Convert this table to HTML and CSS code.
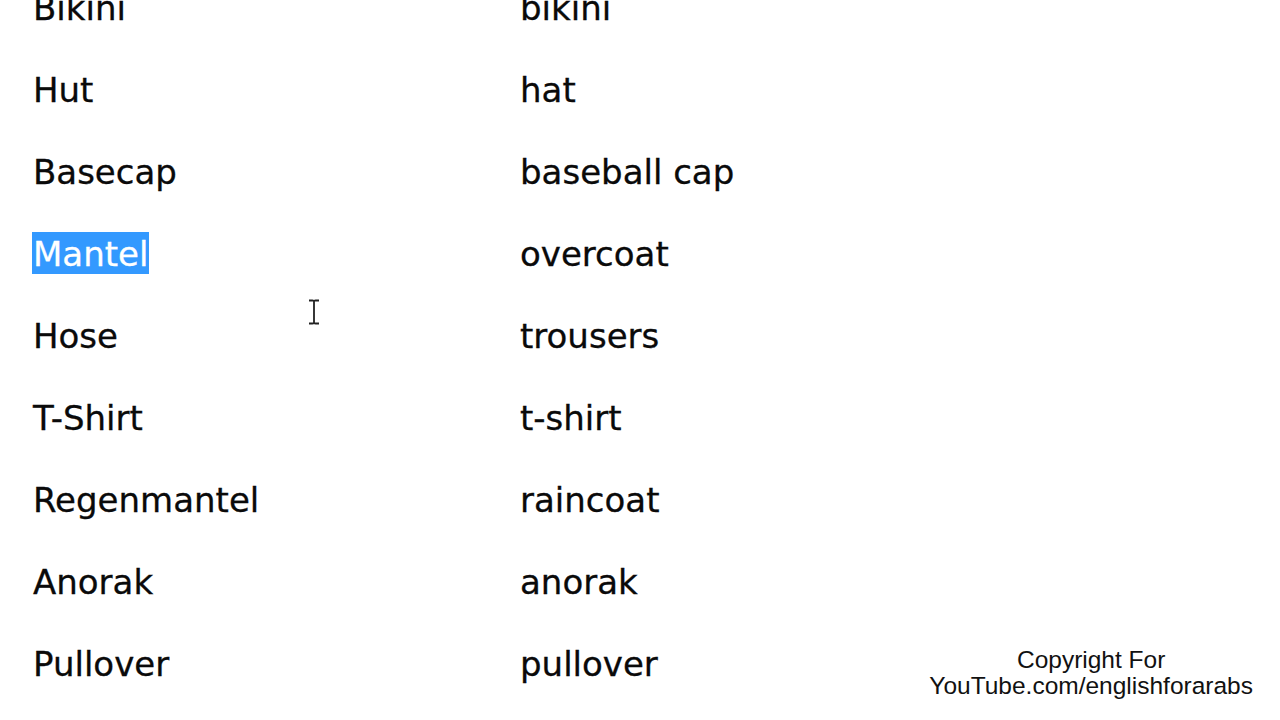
FILE: index.html
```html
<!DOCTYPE html>
<html>
<head>
<meta charset="utf-8">
<link rel="stylesheet" href="styles.css">
</head>
<body>
<div class="vocab">
  <div class="row"><span class="de">Bikini</span><span class="en">bikini</span></div>
  <div class="row"><span class="de">Hut</span><span class="en">hat</span></div>
  <div class="row"><span class="de">Basecap</span><span class="en">baseball cap</span></div>
  <div class="row"><span class="de"><span class="sel">Mantel</span></span><span class="en">overcoat</span></div>
  <div class="row"><span class="de">Hose</span><span class="en">trousers</span></div>
  <div class="row"><span class="de">T-Shirt</span><span class="en">t-shirt</span></div>
  <div class="row"><span class="de">Regenmantel</span><span class="en">raincoat</span></div>
  <div class="row"><span class="de">Anorak</span><span class="en">anorak</span></div>
  <div class="row"><span class="de">Pullover</span><span class="en">pullover</span></div>
</div>
<svg class="ibeam" width="12" height="26" viewBox="0 0 12 26">
  <path d="M1 1.5h3.5M7.5 1.5H11M1 24.5h3.5M7.5 24.5H11M6 2.5v21M4.5 1.5Q6 1.5 6 2.5Q6 1.5 7.5 1.5M4.5 24.5Q6 24.5 6 23.5Q6 24.5 7.5 24.5" fill="none" stroke="#222" stroke-width="1.8"/>
</svg>
<div class="copyright">Copyright For<br>YouTube.com/englishforarabs</div>
</body>
</html>
```
FILE: styles.css
```css
html, body {
  margin: 0;
  padding: 0;
  background: #ffffff;
  width: 1280px;
  height: 720px;
  overflow: hidden;
}
body {
  position: relative;
}
.vocab {
  margin-top: -33px;
  padding-left: 33px;
  display: flex;
  flex-direction: column;
  font-family: "DejaVu Sans", Verdana, sans-serif;
  font-size: 34px;
  color: #0a0a0a;
  -webkit-text-stroke: 0.3px #0a0a0a;
}
.row {
  display: grid;
  grid-template-columns: 487px auto;
  height: 82px;
  line-height: 82px;
  white-space: nowrap;
}
.sel {
  background: #3399ff;
  color: #ffffff;
  -webkit-text-stroke: 0.3px #ffffff;
  padding: 2px 1px 0 1px;
  margin-left: -1px;
}
.ibeam {
  position: absolute;
  left: 308px;
  top: 299px;
}
.copyright {
  position: absolute;
  right: 27px;
  top: 647px;
  font-family: "Liberation Sans", Arial, sans-serif;
  font-size: 24.5px;
  line-height: 26px;
  text-align: center;
  color: #111111;
  white-space: nowrap;
}
```
